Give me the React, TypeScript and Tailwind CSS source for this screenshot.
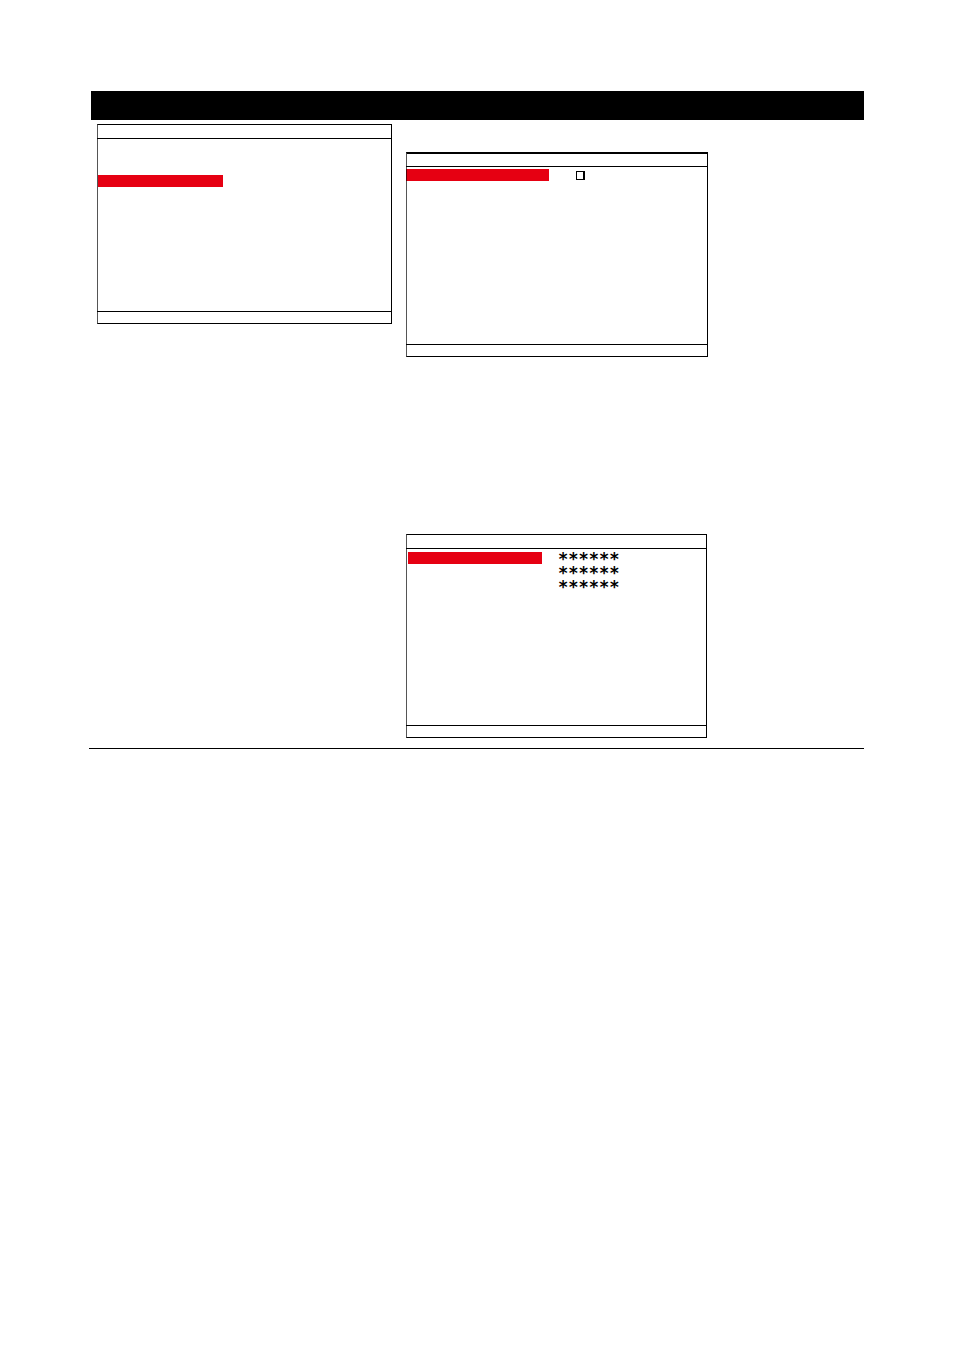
import type { ReactNode } from "react";

type ScreenProps = {
  label: string;
  className?: string;
  headClassName?: string;
  bodyClassName?: string;
  children: ReactNode;
};

function Screen({ label, className = "", headClassName = "h-[14px]", bodyClassName = "", children }: ScreenProps) {
  return (
    <section aria-label={label} className={`border border-black border-l-[#555555] bg-white ${className}`}>
      <div className={`-ml-px border-b border-black ${headClassName}`} />
      <div className={`flex items-start ${bodyClassName}`}>{children}</div>
      <div className="-ml-px h-3 border-t border-black" />
    </section>
  );
}

const passwords = ["******", "******", "******"];

export default function App() {
  return (
    <main className="min-h-screen bg-white pt-[91px] pr-[90px] pl-[89px] font-['DejaVu_Sans_Mono',monospace] text-black">
      <header className="ml-[2px] h-[29px] bg-black" />
      <div className="mt-1 ml-2 grid grid-cols-[295fr_302fr_142fr] items-start gap-x-[14px]">
        <Screen label="Main menu" bodyClassName="min-h-[172px] pt-9">
          <div className="h-3 w-[125px] bg-[#e60012]" />
        </Screen>
        <div className="flex flex-col gap-[177px] pt-7">
          <Screen
            label="Password check"
            className="border-t-2"
            headClassName="h-[13px]"
            bodyClassName="min-h-[177px] gap-[27px] pt-[2px]"
          >
            <div className="-ml-px h-3 w-[143px] border-l border-[#550008] bg-[#e60012]" />
            <div className="flex h-[13px] items-center">
              <input
                type="checkbox"
                aria-label="Password check"
                className="m-0 block h-[9px] w-[9px] appearance-none border border-r-2 border-black bg-white"
              />
            </div>
          </Screen>
          <Screen label="New password" className="mr-px" bodyClassName="min-h-[176px] gap-4 pt-[3px] pl-px">
            <div className="h-3 w-[134px] bg-[#e60012]" />
            <ul className="text-[17px] leading-[14px] font-bold">
              {passwords.map((value, index) => (
                <li key={index}>{value}</li>
              ))}
            </ul>
          </Screen>
        </div>
      </div>
      <hr className="mt-[10px] border-t border-black" />
    </main>
  );
}
